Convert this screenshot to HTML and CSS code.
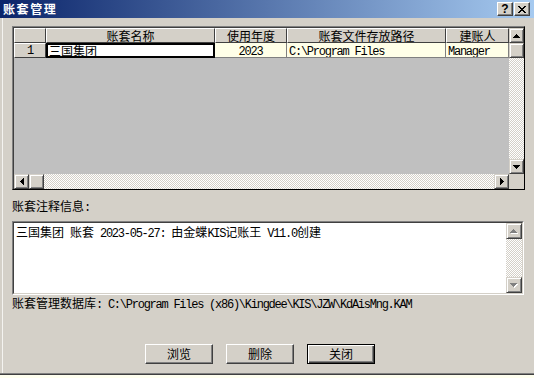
FILE: index.html
```html
<!DOCTYPE html>
<html lang="zh-CN">
<head>
<meta charset="utf-8">
<title>账套管理</title>
<link rel="stylesheet" href="styles.css">
</head>
<body>
<div class="win">
  <div class="titlebar">
    <span class="title">账套管理</span>
    <div class="caps">
      <span class="cap cap-help">?</span>
      <span class="cap">
        <svg width="8" height="7" viewBox="0 0 8 7" shape-rendering="crispEdges">
          <rect x="0" y="0" width="2" height="1"/><rect x="6" y="0" width="2" height="1"/>
          <rect x="1" y="1" width="2" height="1"/><rect x="5" y="1" width="2" height="1"/>
          <rect x="2" y="2" width="4" height="1"/>
          <rect x="3" y="3" width="2" height="1"/>
          <rect x="2" y="4" width="4" height="1"/>
          <rect x="1" y="5" width="2" height="1"/><rect x="5" y="5" width="2" height="1"/>
          <rect x="0" y="6" width="2" height="1"/><rect x="6" y="6" width="2" height="1"/>
        </svg>
      </span>
    </div>
  </div>

  <div class="content">
    <div class="grid">
      <div class="grid-in">
        <div class="data">
          <div class="row">
            <div class="hc c0"></div>
            <div class="hc c1">账套名称</div>
            <div class="hc c2">使用年度</div>
            <div class="hc c3">账套文件存放路径</div>
            <div class="hc c4">建账人</div>
          </div>
          <div class="row">
            <div class="hc c0 rh"><span class="en">1</span></div>
            <div class="dc c1 sel">三国集团</div>
            <div class="dc c2 center"><span class="en">2023</span></div>
            <div class="dc c3"><span class="en">C:\Program Files</span></div>
            <div class="dc c4"><span class="en">Manager</span></div>
          </div>
        </div>
        <div class="vscroll">
          <div class="sb">
            <svg width="7" height="4" viewBox="0 0 7 4" shape-rendering="crispEdges"><rect x="3" y="0" width="1" height="1"/><rect x="2" y="1" width="3" height="1"/><rect x="1" y="2" width="5" height="1"/><rect x="0" y="3" width="7" height="1"/></svg>
          </div>
          <div class="sb thumb"></div>
          <div class="track"></div>
          <div class="sb">
            <svg width="7" height="4" viewBox="0 0 7 4" shape-rendering="crispEdges"><rect x="0" y="0" width="7" height="1"/><rect x="1" y="1" width="5" height="1"/><rect x="2" y="2" width="3" height="1"/><rect x="3" y="3" width="1" height="1"/></svg>
          </div>
        </div>
        <div class="hscroll">
          <div class="sb">
            <svg width="4" height="7" viewBox="0 0 4 7" shape-rendering="crispEdges"><rect x="3" y="0" width="1" height="7"/><rect x="2" y="1" width="1" height="5"/><rect x="1" y="2" width="1" height="3"/><rect x="0" y="3" width="1" height="1"/></svg>
          </div>
          <div class="sb thumb"></div>
          <div class="track"></div>
          <div class="sb">
            <svg width="4" height="7" viewBox="0 0 4 7" shape-rendering="crispEdges"><rect x="0" y="0" width="1" height="7"/><rect x="1" y="1" width="1" height="5"/><rect x="2" y="2" width="1" height="3"/><rect x="3" y="3" width="1" height="1"/></svg>
          </div>
        </div>
        <div class="corner"></div>
      </div>
    </div>

    <div class="lbl">账套注释信息<span class="en">:</span></div>

    <div class="memo">
      <div class="memo-in">
        <div class="memo-text">三国集团<span class="en"> </span>账套<span class="en"> 2023-05-27: </span>由金蝶<span class="en">KIS</span>记账王<span class="en"> V11.0</span>创建</div>
        <div class="mscroll">
          <div class="sb">
            <svg width="8" height="5" viewBox="0 0 8 5" shape-rendering="crispEdges"><g fill="#fff"><rect x="4" y="1" width="1" height="1"/><rect x="3" y="2" width="3" height="1"/><rect x="2" y="3" width="5" height="1"/><rect x="1" y="4" width="7" height="1"/></g><g fill="#808080"><rect x="3" y="0" width="1" height="1"/><rect x="2" y="1" width="3" height="1"/><rect x="1" y="2" width="5" height="1"/><rect x="0" y="3" width="7" height="1"/></g></svg>
          </div>
          <div class="track"></div>
          <div class="sb">
            <svg width="8" height="5" viewBox="0 0 8 5" shape-rendering="crispEdges"><g fill="#fff"><rect x="1" y="1" width="7" height="1"/><rect x="2" y="2" width="5" height="1"/><rect x="3" y="3" width="3" height="1"/><rect x="4" y="4" width="1" height="1"/></g><g fill="#808080"><rect x="0" y="0" width="7" height="1"/><rect x="1" y="1" width="5" height="1"/><rect x="2" y="2" width="3" height="1"/><rect x="3" y="3" width="1" height="1"/></g></svg>
          </div>
        </div>
      </div>
    </div>

    <div class="dbpath">账套管理数据库<span class="en">: C:\Program Files (x86)\Kingdee\KIS\JZW\KdAisMng.KAM</span></div>

    <div class="btns">
      <div class="btn">浏览</div>
      <div class="btn">删除</div>
      <div class="btn default">关闭</div>
    </div>
  </div>
</div>
</body>
</html>
```

FILE: styles.css
```css
html, body {
  margin: 0;
  padding: 0;
}
body {
  width: 534px;
  height: 378px;
  overflow: hidden;
  background: #fffff0;
  font-family: "Noto Sans CJK SC", sans-serif;
  font-size: 12px;
  color: #000;
}
.en {
  font-family: "Liberation Mono", monospace;
  font-size: 12px;
  letter-spacing: -1.25px;
}
.win {
  height: 373px;
  background: #d4d0c8;
  border-bottom: 1px solid #808080;
  box-shadow: 0 1px 0 #404040;
  display: flex;
  flex-direction: column;
}
.titlebar {
  height: 18px;
  flex: none;
  background: linear-gradient(to right, #0a246a, #a6caf0);
  display: flex;
  align-items: center;
  justify-content: space-between;
  padding: 0 4px 0 3px;
}
.title {
  color: #fff;
  font-weight: bold;
  letter-spacing: 1.6px;
  line-height: 14px;
}
.caps {
  display: flex;
  gap: 1px;
}
.cap {
  width: 16px;
  height: 14px;
  box-sizing: border-box;
  background: #d4d0c8;
  border: 1px solid;
  border-color: #fff #404040 #404040 #fff;
  box-shadow: inset -1px -1px #808080;
  display: flex;
  align-items: center;
  justify-content: center;
}
.cap-help {
  font-family: "Liberation Sans", sans-serif;
  font-weight: bold;
  font-size: 12px;
  line-height: 12px;
}
.content {
  flex: 1;
  padding: 8px 0 0 12px;
  background: linear-gradient(#f4f3f0, #f4f3f0) no-repeat 2px 0 / 1px 100%;
}
.grid {
  width: 513px;
  height: 164px;
  box-sizing: border-box;
  border: 1px solid;
  border-color: #808080 #000 #000 #808080;
}
.grid-in {
  border-top: 1px solid #404040;
  border-left: 1px solid #404040;
  display: grid;
  grid-template-columns: 495px 15px;
  grid-template-rows: 146px 15px;
}
.data {
  background: #c0c0c0;
}
.row {
  display: flex;
  height: 15px;
}
.c0 { width: 32px; }
.c1 { width: 169px; }
.c2 { width: 72px; }
.c3 { width: 159px; }
.c4 { width: 63px; }
.hc {
  box-sizing: border-box;
  height: 15px;
  background: #d4d0c8;
  border: 1px solid;
  border-color: #fff #404040 #404040 #fff;
  text-align: center;
  line-height: 13px;
  white-space: nowrap;
  overflow: hidden;
}
.rh {
  display: flex;
  align-items: center;
  justify-content: center;
}
.rh .en {
  line-height: 12px;
}
.dc {
  box-sizing: border-box;
  height: 15px;
  background: #ffffe8;
  border-right: 1px solid #808080;
  border-bottom: 1px solid #808080;
  line-height: 14px;
  padding-left: 2px;
  white-space: nowrap;
  overflow: hidden;
}
.center {
  text-align: center;
  padding-left: 0;
}
.sel {
  background: #fff;
  border: 2px solid #000;
  line-height: 11px;
  padding-left: 1px;
}
.sb {
  box-sizing: border-box;
  width: 15px;
  height: 15px;
  flex: none;
  background: #d4d0c8;
  border: 1px solid;
  border-color: #d4d0c8 #404040 #404040 #d4d0c8;
  box-shadow: inset 1px 1px #fff, inset -1px -1px #808080;
  display: flex;
  align-items: center;
  justify-content: center;
}
.track {
  flex: 1;
  background-image: repeating-conic-gradient(#fff 0% 25%, #d4d0c8 0% 50%);
  background-size: 2px 2px;
}
.vscroll {
  display: flex;
  flex-direction: column;
}
.hscroll {
  display: flex;
}
.corner {
  background: #d4d0c8;
}
.lbl {
  margin-top: 9px;
  line-height: 14px;
  height: 14px;
}
.memo {
  margin-top: 8px;
  width: 512px;
  height: 74px;
  box-sizing: border-box;
  border: 1px solid;
  border-color: #808080 #fff #fff #808080;
}
.memo-in {
  height: 72px;
  box-sizing: border-box;
  border: 1px solid;
  border-color: #404040 #d4d0c8 #d4d0c8 #404040;
  background: #fff;
  display: flex;
}
.memo-text {
  flex: 1;
  padding: 2px 0 0 2px;
  line-height: 14px;
  white-space: nowrap;
}
.mscroll {
  width: 16px;
  display: flex;
  flex-direction: column;
}
.mscroll .sb {
  width: 16px;
  height: 16px;
}
.dbpath {
  margin-top: 1px;
  line-height: 14px;
  height: 14px;
  white-space: nowrap;
}
.btns {
  margin-top: 34px;
  padding-left: 133px;
  display: flex;
  gap: 13px;
}
.btn {
  width: 68px;
  height: 20px;
  box-sizing: border-box;
  background: #d4d0c8;
  border: 1px solid;
  border-color: #fff #404040 #404040 #fff;
  box-shadow: inset -1px -1px #808080;
  text-align: center;
  line-height: 17px;
}
.btn.default {
  border-color: #000;
  box-shadow: inset 1px 1px #fff, inset -1px -1px #404040, inset -2px -2px #808080;
}
```
